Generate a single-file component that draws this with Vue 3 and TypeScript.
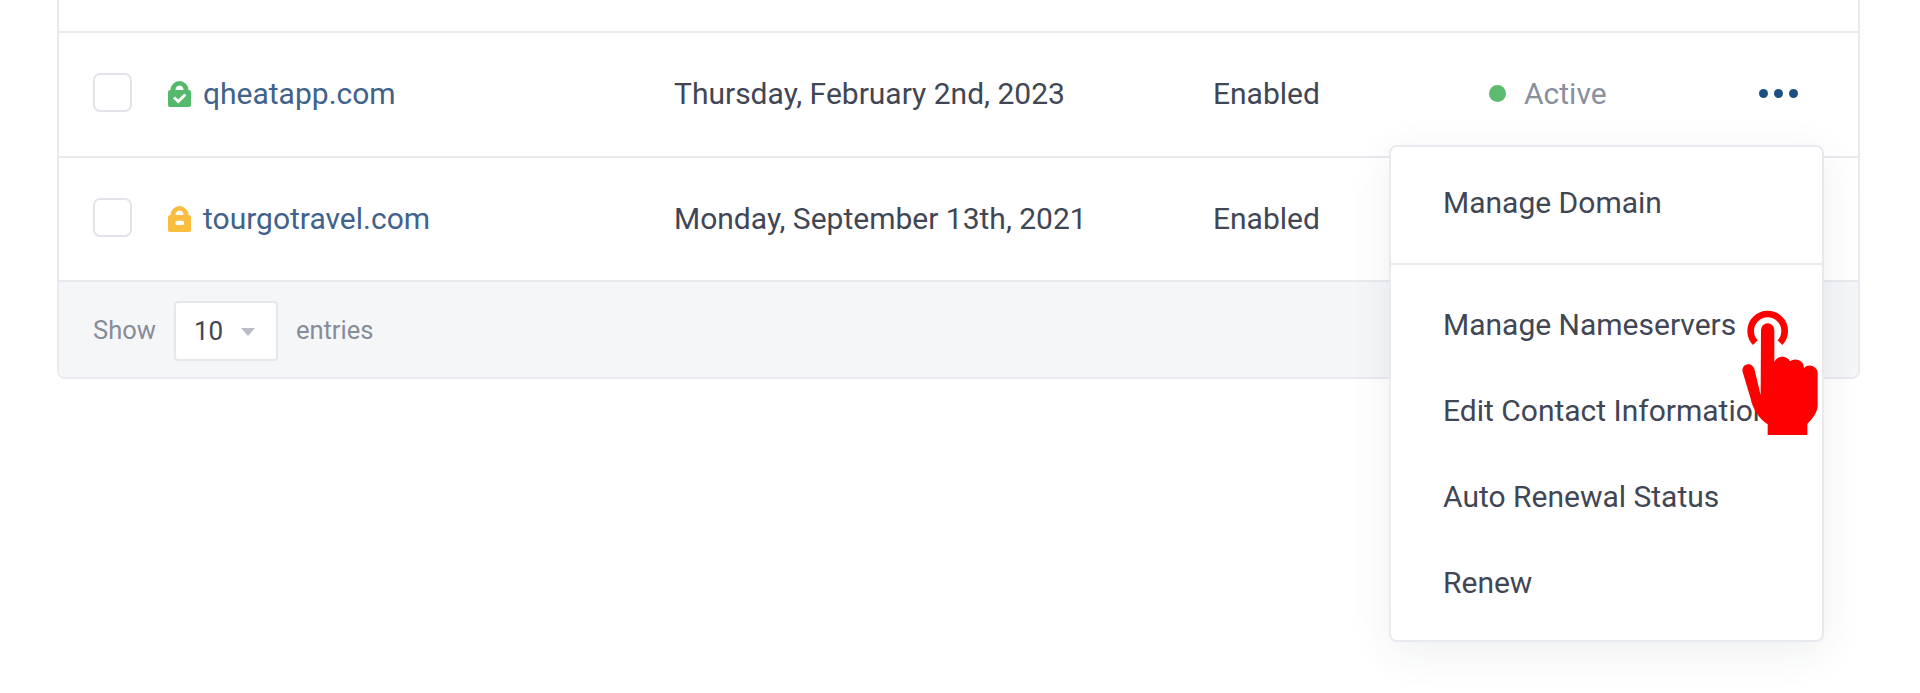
<script setup lang="ts">
import { ref } from 'vue'

interface Domain {
  name: string
  expires: string
  autoRenew: string
  status: string
  secure: boolean
}

const domains = ref<Domain[]>([
  { name: 'qheatapp.com', expires: 'Thursday, February 2nd, 2023', autoRenew: 'Enabled', status: 'Active', secure: true },
  { name: 'tourgotravel.com', expires: 'Monday, September 13th, 2021', autoRenew: 'Enabled', status: '', secure: false },
])

const menuItems = ['Manage Nameservers', 'Edit Contact Information', 'Auto Renewal Status', 'Renew']
</script>

<template>
  <div class="page">
    <div class="card">
      <div class="head"></div>
      <div v-for="domain in domains" :key="domain.name" class="row">
        <span class="check"></span>
        <div class="domain">
          <svg class="lock" viewBox="0 0 23 26" :class="domain.secure ? 'green' : 'yellow'">
            <path
              d="M2.500 9a9 9 0 0 1 18 0h.300A2.200 2.200 0 0 1 23 11.200V24a2 2 0 0 1-2 2H2a2 2 0 0 1-2-2V11.200A2.200 2.200 0 0 1 2.200 9zM7.500 9h8a4 4.500 0 0 0-8 0z"
              fill="currentColor"
              fill-rule="evenodd"
            />
            <path v-if="domain.secure" d="M6 16.500l4.300 4 7-7" fill="none" stroke="#fff" stroke-width="3" />
            <rect v-else x="7.500" y="14.700" width="8.500" height="4.300" rx="1.500" fill="#fff" />
          </svg>
          <a class="name">{{ domain.name }}</a>
        </div>
        <div class="expires">{{ domain.expires }}</div>
        <div class="renew">{{ domain.autoRenew }}</div>
        <div class="status">
          <template v-if="domain.status">
            <span class="status-dot"></span>
            <span class="status-text">{{ domain.status }}</span>
          </template>
        </div>
        <div class="actions">
          <template v-if="domain.secure">
            <i></i><i></i><i></i>
          </template>
        </div>
      </div>
      <div class="footer">
        <span class="label">Show</span>
        <div class="select">
          <span>10</span>
          <b class="caret"></b>
        </div>
        <span class="label">entries</span>
      </div>

      <div class="menu">
        <div class="menu-top"><span>Manage Domain</span></div>
        <div class="menu-list">
          <div v-for="item in menuItems" :key="item" class="menu-item">{{ item }}</div>
        </div>
      </div>

      <svg class="hand" viewBox="0 0 450 480">
        <path d="M166 158A51 51 0 1 1 240 158" fill="none" stroke="#f00" stroke-width="20" />
        <path
          d="M183 120a20 20 0 0 1 40 0V216A26 26 0 0 1 270 214A26 26 0 0 1 312 234A24 24 0 0 1 353 252V350C350 372 336 386 322 402V435H203V403C176 384 158 356 152 326L128 246C122 220 158 212 164 240L182 316z"
          fill="#f00"
        />
      </svg>
    </div>
  </div>
</template>

<style scoped>
.page {
  height: 693px;
  box-sizing: border-box;
  padding: 0 60px 0 57px;
  overflow: hidden;
  background: #fff;
  font-family: Roboto, 'Liberation Sans', sans-serif;
}

.card {
  position: relative;
  width: 1803px;
  box-sizing: border-box;
  border: 2px solid #e9eaf0;
  border-top: none;
  border-radius: 0 0 8px 8px;
}

.head {
  height: 31px;
  border-bottom: 2px solid #e9eaf0;
}

.row {
  display: flex;
  align-items: center;
  height: 121.5px;
  padding: 0 0 1px 34px;
  border-bottom: 2px solid #e9eaf0;
  font-size: 30px;
  color: #414654;
}

.row + .row {
  height: 122.5px;
  padding-bottom: 0;
}

.check {
  width: 39px;
  height: 39px;
  box-sizing: border-box;
  flex: none;
  margin-right: 36px;
  margin-bottom: 2px;
  border: 2px solid #e3e4ea;
  border-radius: 7px;
}

.domain {
  display: flex;
  align-items: center;
  gap: 12px;
  width: 506px;
  flex: none;
}

.lock {
  width: 23px;
  height: 26px;
  flex: none;
}

.green {
  color: #54b96a;
}

.yellow {
  color: #fbbd3e;
}

.name {
  color: #41628a;
}

.expires {
  width: 539px;
  flex: none;
}

.renew {
  width: 276px;
  flex: none;
}

.status {
  display: flex;
  align-items: center;
  width: 270px;
  flex: none;
}

.status-dot {
  width: 17px;
  height: 17px;
  margin-right: 18px;
  border-radius: 50%;
  background: #5cbb6e;
}

.status-text {
  color: #8a8f9c;
}

.actions {
  display: flex;
  gap: 6px;
}

.actions i {
  width: 9px;
  height: 9px;
  border-radius: 50%;
  background: #1c4f85;
}

.footer {
  display: flex;
  align-items: center;
  gap: 18px;
  height: 92px;
  padding: 3px 0 0 34px;
  background: #f5f6f8;
  border-radius: 0 0 7px 7px;
  font-size: 25.5px;
  color: #878c99;
}

.label {
  margin-bottom: 3px;
}

.select {
  display: flex;
  align-items: center;
  width: 104px;
  height: 60px;
  box-sizing: border-box;
  padding-left: 18px;
  background: #fff;
  border: 2px solid #e6e7ec;
  border-radius: 4px;
  font-size: 26px;
  color: #414654;
}

.caret {
  width: 0;
  height: 0;
  margin-left: 18px;
  margin-top: 2px;
  border-left: 7px solid transparent;
  border-right: 7px solid transparent;
  border-top: 8px solid #b9bcc6;
}

.menu {
  position: absolute;
  left: 1330px;
  top: 145px;
  width: 435px;
  height: 497px;
  box-sizing: border-box;
  background: #fff;
  border: 2px solid #e9eaf0;
  border-radius: 8px;
  box-shadow: 0 10px 40px rgba(40, 45, 70, 0.08);
  font-size: 30px;
  color: #414654;
}

.menu-top {
  display: flex;
  align-items: center;
  height: 110px;
  padding: 0 0 6px 52px;
  border-bottom: 2px solid #e9eaf0;
}

.menu-list {
  padding-top: 16px;
}

.menu-item {
  display: flex;
  align-items: center;
  height: 86px;
  padding-left: 52px;
  white-space: nowrap;
}

.hand {
  position: absolute;
  left: 1641px;
  top: 290px;
  width: 150px;
  height: 160px;
}
</style>

<style>
html,
body {
  margin: 0;
  background: #fff;
}
</style>
